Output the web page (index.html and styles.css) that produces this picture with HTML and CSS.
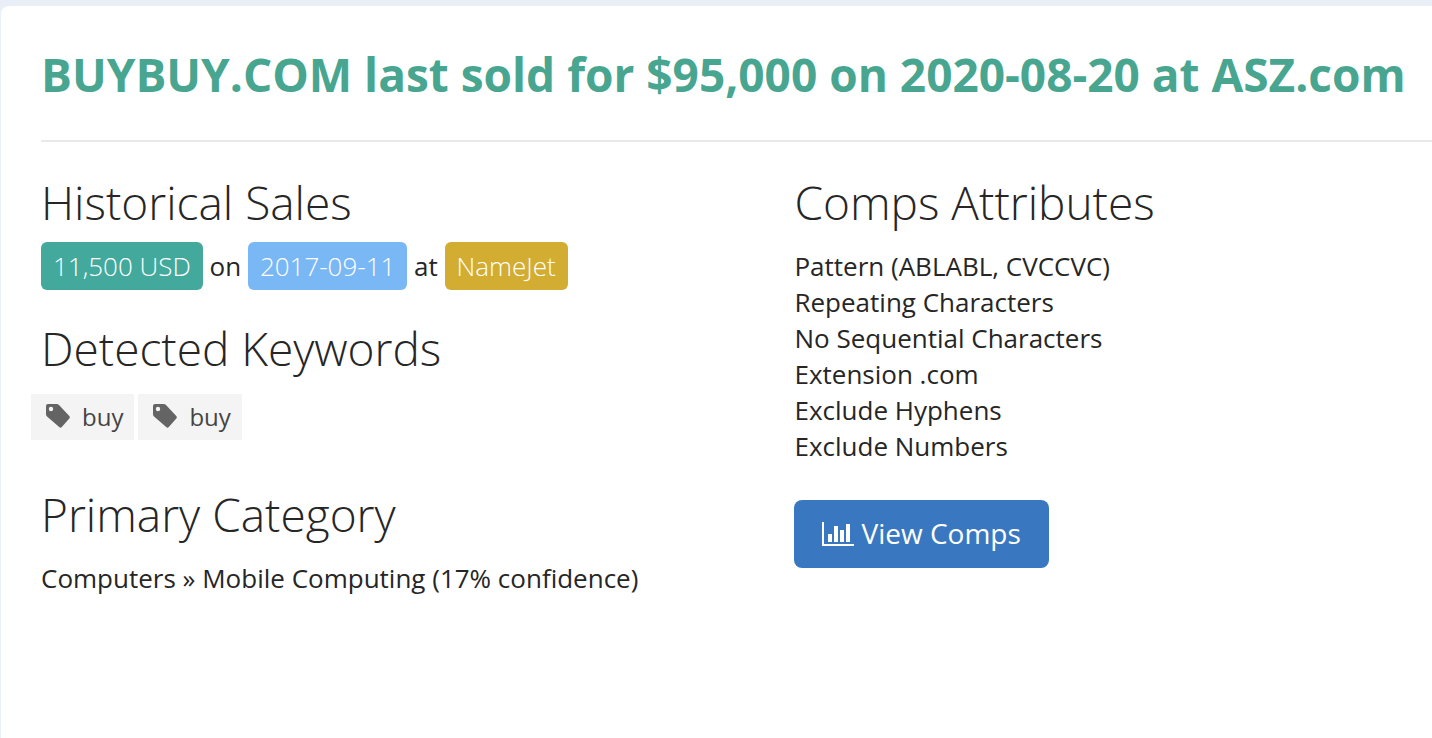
FILE: index.html
```html
<!DOCTYPE html>
<html lang="en">
<head>
    <meta charset="UTF-8">
    <meta name="viewport" content="width=device-width, initial-scale=1">
    <title>BUYBUY.COM</title>
    <link rel="stylesheet" href="styles.css">
</head>
<body>

    <main class="card">
        <h1>BUYBUY.COM last sold for $95,000 on 2020-08-20 at ASZ.com</h1>

        <div class="columns">
            <div class="column">
                <section>
                    <h2>Historical Sales</h2>
                    <p class="sale">
                        <span class="label price">11,500 USD</span> on
                        <span class="label date">2017-09-11</span> at
                        <span class="label venue">NameJet</span>
                    </p>
                </section>

                <section>
                    <h2>Detected Keywords</h2>
                    <ul class="tags">
                        <li class="tag">
                            <svg width="26" height="26" viewBox="0 0 26 26" aria-hidden="true">
                                <path fill-rule="evenodd" d="M3 1h8.500q1.500 0 2.500 1l10.300 11q1.300 1.300 0 2.600l-7.500 8.400q-1.300 1.400-2.600 0L2 13.500q-1-1-1-2.500V3q0-2 2-2zM6 3.800a2.200 2.200 0 1 0 0 4.400a2.200 2.200 0 1 0 0-4.400z"/>
                            </svg>
                            buy
                        </li>
                        <li class="tag">
                            <svg width="26" height="26" viewBox="0 0 26 26" aria-hidden="true">
                                <path fill-rule="evenodd" d="M3 1h8.500q1.500 0 2.500 1l10.300 11q1.300 1.300 0 2.600l-7.500 8.400q-1.300 1.400-2.600 0L2 13.500q-1-1-1-2.500V3q0-2 2-2zM6 3.800a2.200 2.200 0 1 0 0 4.400a2.200 2.200 0 1 0 0-4.400z"/>
                            </svg>
                            buy
                        </li>
                    </ul>
                </section>

                <section>
                    <h2>Primary Category</h2>
                    <p class="category">Computers » Mobile Computing (17% confidence)</p>
                </section>
            </div>

            <div class="column">
                <h2>Comps Attributes</h2>
                <ul class="attributes">
                    <li>Pattern (ABLABL, CVCCVC)</li>
                    <li>Repeating Characters</li>
                    <li>No Sequential Characters</li>
                    <li>Extension .com</li>
                    <li>Exclude Hyphens</li>
                    <li>Exclude Numbers</li>
                </ul>
                <button type="button" class="btn">
                    <svg width="32" height="24" viewBox="0 0 32 24" aria-hidden="true">
                        <path d="M0 0h2v22h30v2H0zM6 12h4v8H6zM12 4h4v16h-4zM18 8h4v12h-4zM24 2h4v18h-4z"/>
                    </svg>
                    View Comps
                </button>
            </div>
        </div>
    </main>

</body>
</html>
```

FILE: styles.css
```css
* {
    box-sizing: border-box;
}
body {
    margin: 0;
    padding: 6px 0 0 1px;
    background-color: #e9eef7;
    color: #262626;
    font-family: "Open Sans", "Noto Sans", sans-serif;
    font-size: 26px;
    line-height: 36px;
}
.card {
    min-height: calc(100vh - 6px);
    padding: 38px 0 40px 40px;
    background-color: #fff;
    border-top-left-radius: 8px;
}
h1 {
    margin: 0;
    padding-bottom: 36px;
    border-bottom: 2px solid #e9e9e9;
    color: #48a690;
    font-size: 46px;
    font-weight: 700;
    line-height: 60px;
}
h2 {
    margin: 0;
    font-size: 46px;
    font-weight: 300;
    line-height: 50px;
}
p, ul {
    margin: 0;
    padding: 0;
    list-style: none;
}
.columns {
    display: grid;
    grid-template-columns: 13fr 11fr;
    padding-top: 35px;
}
.sale {
    margin: 15px 0 33px;
}
.label {
    display: inline-block;
    padding: 6px 12px;
    border-radius: 6px;
    color: #fff;
    font-weight: 300;
}
.price {
    background-color: #43a99d;
}
.date {
    background-color: #7ab7f5;
}
.venue {
    background-color: #d3ac32;
}
.tags {
    display: flex;
    gap: 4px;
    margin: 21px 0 49px -10px;
}
.tag {
    display: flex;
    gap: 11px;
    padding: 5px 11px 5px 14px;
    background-color: #f4f4f4;
    color: #444;
    font-size: 24px;
}
.tag svg {
    margin-top: 4px;
    fill: #646464;
}
.category {
    margin-top: 21px;
}
.attributes {
    margin: 21px 0 36px;
}
.btn {
    display: flex;
    align-items: center;
    gap: 7px;
    padding: 13px 28px 15px;
    border: none;
    border-radius: 8px;
    background-color: #3978c0;
    color: #fff;
    font-family: inherit;
    font-size: 28px;
    line-height: 40px;
    cursor: pointer;
}
.btn svg {
    margin-top: 2px;
    fill: currentColor;
}
```
